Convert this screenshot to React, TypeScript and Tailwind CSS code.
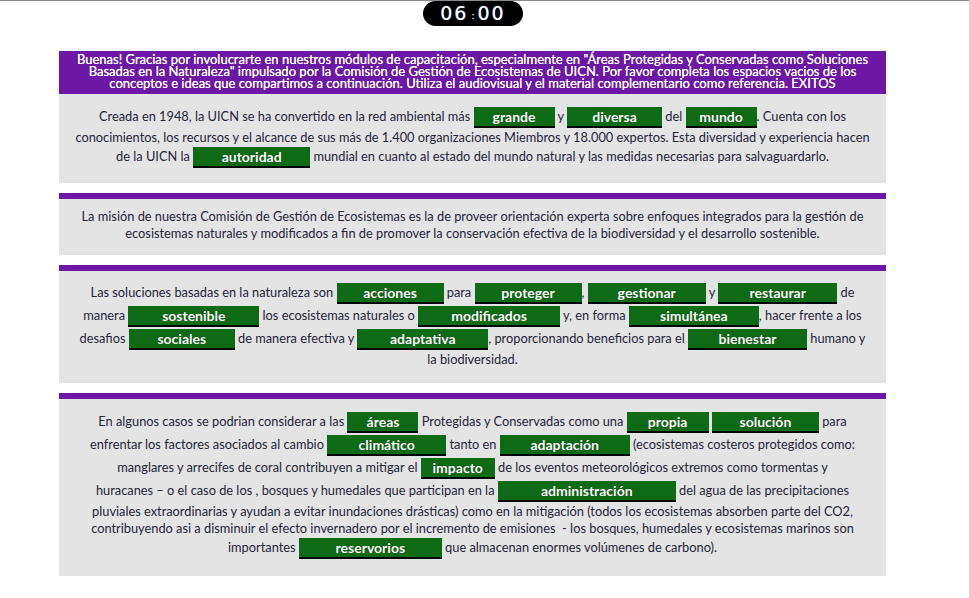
import type { ReactNode } from "react";

type Part = string | { word: string; w: string };

function Blank({ word, w }: { word: string; w: string }) {
  return (
    <span
      className={`${w} my-[1px] inline-block h-[21px] border-b-2 border-black bg-[#0c6b14] text-center align-middle text-[14px] font-bold leading-[19px] text-white [text-shadow:0_0_1px_#003300]`}
    >
      {word}
    </span>
  );
}

function Paragraph({ parts }: { parts: Part[] }) {
  return (
    <p className="whitespace-pre-line text-center">
      {parts.map((part, index) =>
        typeof part === "string" ? (
          <span key={index}>{part}</span>
        ) : (
          <Blank key={index} word={part.word} w={part.w} />
        ),
      )}
    </p>
  );
}

function Card({
  children,
  bar = true,
  pad = "pb-[16px] pt-[12px]",
}: {
  children: ReactNode;
  bar?: boolean;
  pad?: string;
}) {
  return (
    <section>
      {bar ? <div className="h-[6px] bg-[#6c17a6]" /> : null}
      <div className={`${pad} bg-[#e4e4e4] px-3 text-[12.8px] leading-[17px] text-[#25253a]`}>
        {children}
      </div>
    </section>
  );
}

const intro: Part[] = [
  "Creada en 1948, la UICN se ha convertido en la red ambiental más ",
  { word: "grande", w: "w-[81px]" },
  " y ",
  { word: "diversa", w: "w-[95px]" },
  " del ",
  { word: "mundo", w: "w-[71px]" },
  ". Cuenta con los conocimientos, los recursos y el alcance de sus más de 1.400 organizaciones Miembros y 18.000 expertos. Esta diversidad y experiencia hacen\nde la UICN la ",
  { word: "autoridad", w: "w-[117px]" },
  " mundial en cuanto al estado del mundo natural y las medidas necesarias para salvaguardarlo.",
];

const soluciones: Part[] = [
  "Las soluciones basadas en la naturaleza son ",
  { word: "acciones", w: "w-[107px]" },
  " para ",
  { word: "proteger", w: "w-[107px]" },
  ", ",
  { word: "gestionar", w: "w-[118px]" },
  " y ",
  { word: "restaurar", w: "w-[119px]" },
  " de\nmanera ",
  { word: "sostenible", w: "w-[131px]" },
  " los ecosistemas naturales o ",
  { word: "modificados", w: "w-[142px]" },
  " y, en forma ",
  { word: "simultánea", w: "w-[130px]" },
  ", hacer frente a los\ndesafios ",
  { word: "sociales", w: "w-[106px]" },
  " de manera efectiva y ",
  { word: "adaptativa", w: "w-[131px]" },
  ", proporcionando beneficios para el ",
  { word: "bienestar", w: "w-[119px]" },
  " humano y\nla biodiversidad.",
];

const areas: Part[] = [
  "En algunos casos se podrian considerar a las ",
  { word: "áreas", w: "w-[71px]" },
  " Protegidas y Conservadas como una ",
  { word: "propia", w: "w-[82px]" },
  " ",
  { word: "solución", w: "w-[107px]" },
  " para\nenfrentar los factores asociados al cambio ",
  { word: "climático", w: "w-[119px]" },
  " tanto en ",
  { word: "adaptación", w: "w-[130px]" },
  " (ecosistemas costeros protegidos como:\nmanglares y arrecifes de coral contribuyen a mitigar el ",
  { word: "impacto", w: "w-[74px]" },
  " de los eventos meteorológicos extremos como tormentas y\nhuracanes – o el caso de los , bosques y humedales que participan en la ",
  { word: "administración", w: "w-[178px]" },
  " del agua de las precipitaciones\npluviales extraordinarias y ayudan a evitar inundaciones drásticas) como en la mitigación (todos los ecosistemas absorben parte del CO2,\ncontribuyendo asi a disminuir el efecto invernadero por el incremento de emisiones \u00a0- los bosques, humedales y ecosistemas marinos son\nimportantes ",
  { word: "reservorios", w: "w-[143px]" },
  " que almacenan enormes volúmenes de carbono).",
];

export default function App() {
  return (
    <div className="min-h-[598px] bg-white font-['Lato','Noto_Sans',sans-serif]">
      <div className="relative h-px bg-[#8a8a8a]">
        <div className="absolute left-[423px] top-px flex h-[25px] w-[100px] items-center justify-center rounded-[13px] bg-black font-['DejaVu_Sans',sans-serif] text-[19px] leading-none tracking-[2px] text-white [text-shadow:0_0_1px_#6aa0ff]">
          <span>06</span>
          <span className="mx-[3px] mt-[6px] text-[9px] tracking-normal">:</span>
          <span>00</span>
        </div>
      </div>

      <main className="ml-[59px] flex w-[827px] flex-col gap-[10px] pt-[50px]">
        <div>
          <div className="bg-[#6c17a6] px-4 pb-[5px] pt-[2px] text-center text-[13px] leading-[12px] text-white [text-shadow:0_0_0.4px_#ffffff]">
            Buenas! Gracias por involucrarte en nuestros módulos de capacitación, especialmente en "Áreas Protegidas y Conservadas como Soluciones Basadas en la Naturaleza" impulsado por la Comisión de Gestión de Ecosistemas de UICN. Por favor completa los espacios vacios de los conceptos e ideas que compartimos a continuación. Utiliza el audiovisual y el material complementario como referencia. EXITOS
          </div>
          <Card bar={false} pad="pb-[14px] pt-[12px]">
            <Paragraph parts={intro} />
          </Card>
        </div>

        <Card pad="pb-[13px] pt-[9px]">
          <p className="text-center">
            La misión de nuestra Comisión de Gestión de Ecosistemas es la de proveer orientación experta sobre enfoques integrados para la gestión de ecosistemas naturales y modificados a fin de promover la conservación efectiva de la biodiversidad y el desarrollo sostenible.
          </p>
        </Card>

        <Card pad="pb-[15px] pt-[11px]">
          <Paragraph parts={soluciones} />
        </Card>

        <Card>
          <Paragraph parts={areas} />
        </Card>
      </main>
    </div>
  );
}
